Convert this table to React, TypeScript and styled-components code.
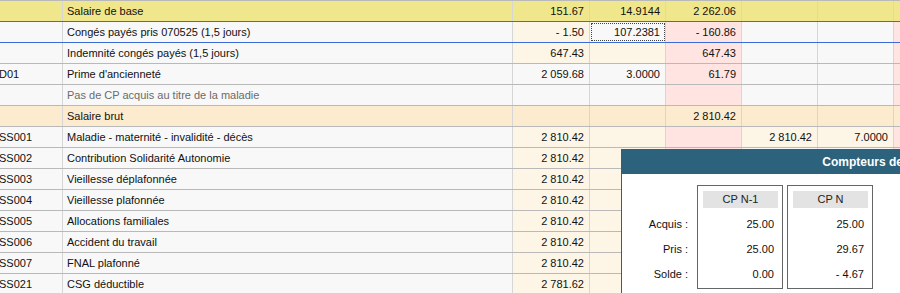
import React from "react";
import styled, { createGlobalStyle, css } from "styled-components";

type Tone = "w" | "c" | "p";
type Kind = "base" | "brut" | "note" | undefined;

const GlobalStyle = createGlobalStyle`
  html, body {
    margin: 0;
    padding: 0;
    overflow: hidden;
    background: #f8f8f8;
  }
  body {
    font-family: "Liberation Sans", Arial, sans-serif;
    font-size: 11px;
    color: #111;
  }
  #root {
    position: relative;
    height: 293px;
    overflow: hidden;
  }
`;

const toneColor: Record<Tone, string> = {
  w: "#f8f8f8",
  c: "#fdf5e6",
  p: "#ffe4e1",
};

const kindColor: Record<string, string> = {
  base: "#f0e68c",
  brut: "#fdebd0",
};

const Grid = styled.div`
  margin-left: -5px;
  width: 910px;
`;

const Row = styled.div<{ $kind?: Kind; $blue?: boolean }>`
  display: grid;
  grid-template-columns: 68px 450px 77px 76px 76px 76px 76px 1fr;
  height: 21px;
  box-sizing: border-box;
  border-top: 1px solid ${(p) => (p.$blue ? "#3b6bd6" : "#b9b9b9")};
  color: ${(p) => (p.$kind === "note" ? "#6b6b6b" : "#111")};
  ${(p) =>
    p.$kind &&
    p.$kind !== "note" &&
    css`
      background: ${kindColor[p.$kind]};
    `}
`;

const Cell = styled.div<{ $tone?: Tone; $num?: boolean; $focus?: boolean }>`
  box-sizing: border-box;
  height: 20px;
  line-height: 20px;
  padding: 0 5px 0 4px;
  border-right: 1px solid #d6d6d6;
  white-space: nowrap;
  overflow: hidden;
  text-align: ${(p) => (p.$num ? "right" : "left")};
  background: ${(p) => (p.$tone ? toneColor[p.$tone] : "transparent")};
  ${(p) =>
    p.$focus &&
    css`
      outline: 1px dotted #444;
      outline-offset: -2px;
    `}
`;

// the dialog sits over the grid and runs past the right edge of the window
const Popup = styled.div`
  position: absolute;
  left: 621px;
  top: 149px;
  width: 564px;
  height: 200px;
  background: #fff;
  border: 1px solid #555;
`;

const PopupHeader = styled.div`
  height: 24px;
  line-height: 24px;
  background: #2c627b;
  color: #fff;
  font-weight: bold;
  font-size: 12px;
  text-align: center;
  white-space: nowrap;
`;

const PopupBody = styled.div`
  display: flex;
  align-items: flex-start;
  padding-top: 11px;
`;

const Labels = styled.div`
  width: 66px;
  margin-top: 27px;
  margin-right: 9px;
  text-align: right;
`;

const Line = styled.div`
  height: 25px;
  line-height: 25px;
`;

const Counter = styled.div`
  width: 86px;
  box-sizing: border-box;
  border: 1px solid #666;
  padding: 5px 4px 1px 5px;
  & + & {
    margin-left: 4px;
  }
`;

const CounterHead = styled.div`
  height: 17px;
  line-height: 17px;
  background: #e3e3e3;
  text-align: center;
  color: #222;
  margin-bottom: 4px;
`;

const Value = styled(Line)`
  text-align: right;
  padding-right: 4px;
`;

type RowData = {
  code: string;
  label: string;
  vals: string[];
  tones: Tone[];
  kind?: Kind;
  blue?: boolean;
  focus?: number;
};

const std: Tone[] = ["c", "c", "p", "w", "w", "p"];

const rows: RowData[] = [
  { code: "", label: "Salaire de base", vals: ["151.67", "14.9144", "2 262.06"], tones: [], kind: "base" },
  {
    code: "",
    label: "Congés payés pris 070525 (1,5 jours)",
    vals: ["- 1.50", "107.2381", "- 160.86"],
    tones: ["c", "w", "p", "w", "w", "p"],
    blue: true,
    focus: 1,
  },
  { code: "", label: "Indemnité congés payés (1,5 jours)", vals: ["647.43", "", "647.43"], tones: std, blue: true },
  { code: "D01", label: "Prime d'ancienneté", vals: ["2 059.68", "3.0000", "61.79"], tones: ["w", "w", "p", "w", "w", "p"] },
  { code: "", label: "Pas de CP acquis au titre de la maladie", vals: [], tones: ["w", "w", "p", "w", "w", "p"], kind: "note" },
  { code: "", label: "Salaire brut", vals: ["", "", "2 810.42"], tones: [], kind: "brut" },
  {
    code: "SS001",
    label: "Maladie - maternité - invalidité - décès",
    vals: ["2 810.42", "", "", "2 810.42", "7.0000"],
    tones: ["c", "c", "p", "c", "c", "p"],
  },
  { code: "SS002", label: "Contribution Solidarité Autonomie", vals: ["2 810.42"], tones: std },
  { code: "SS003", label: "Vieillesse déplafonnée", vals: ["2 810.42"], tones: std },
  { code: "SS004", label: "Vieillesse plafonnée", vals: ["2 810.42"], tones: std },
  { code: "SS005", label: "Allocations familiales", vals: ["2 810.42"], tones: std },
  { code: "SS006", label: "Accident du travail", vals: ["2 810.42"], tones: std },
  { code: "SS007", label: "FNAL plafonné", vals: ["2 810.42"], tones: std },
  { code: "SS021", label: "CSG déductible", vals: ["2 781.62"], tones: std },
];

const counters = [
  { title: "CP N-1", vals: ["25.00", "25.00", "0.00"] },
  { title: "CP N", vals: ["25.00", "29.67", "- 4.67"] },
];

export default function App() {
  return (
    <>
      <GlobalStyle />
      <Grid>
        {rows.map((r, i) => (
          <Row key={i} $kind={r.kind} $blue={r.blue}>
            <Cell>{r.code}</Cell>
            <Cell>{r.label}</Cell>
            {[0, 1, 2, 3, 4, 5].map((j) => (
              <Cell key={j} $num $tone={r.tones[j]} $focus={r.focus === j}>
                {r.vals[j] || ""}
              </Cell>
            ))}
          </Row>
        ))}
      </Grid>
      <Popup>
        <PopupHeader>Compteurs de congés payés</PopupHeader>
        <PopupBody>
          <Labels>
            <Line>Acquis :</Line>
            <Line>Pris :</Line>
            <Line>Solde :</Line>
          </Labels>
          {counters.map((c) => (
            <Counter key={c.title}>
              <CounterHead>{c.title}</CounterHead>
              {c.vals.map((v, k) => (
                <Value key={k}>{v}</Value>
              ))}
            </Counter>
          ))}
        </PopupBody>
      </Popup>
    </>
  );
}
